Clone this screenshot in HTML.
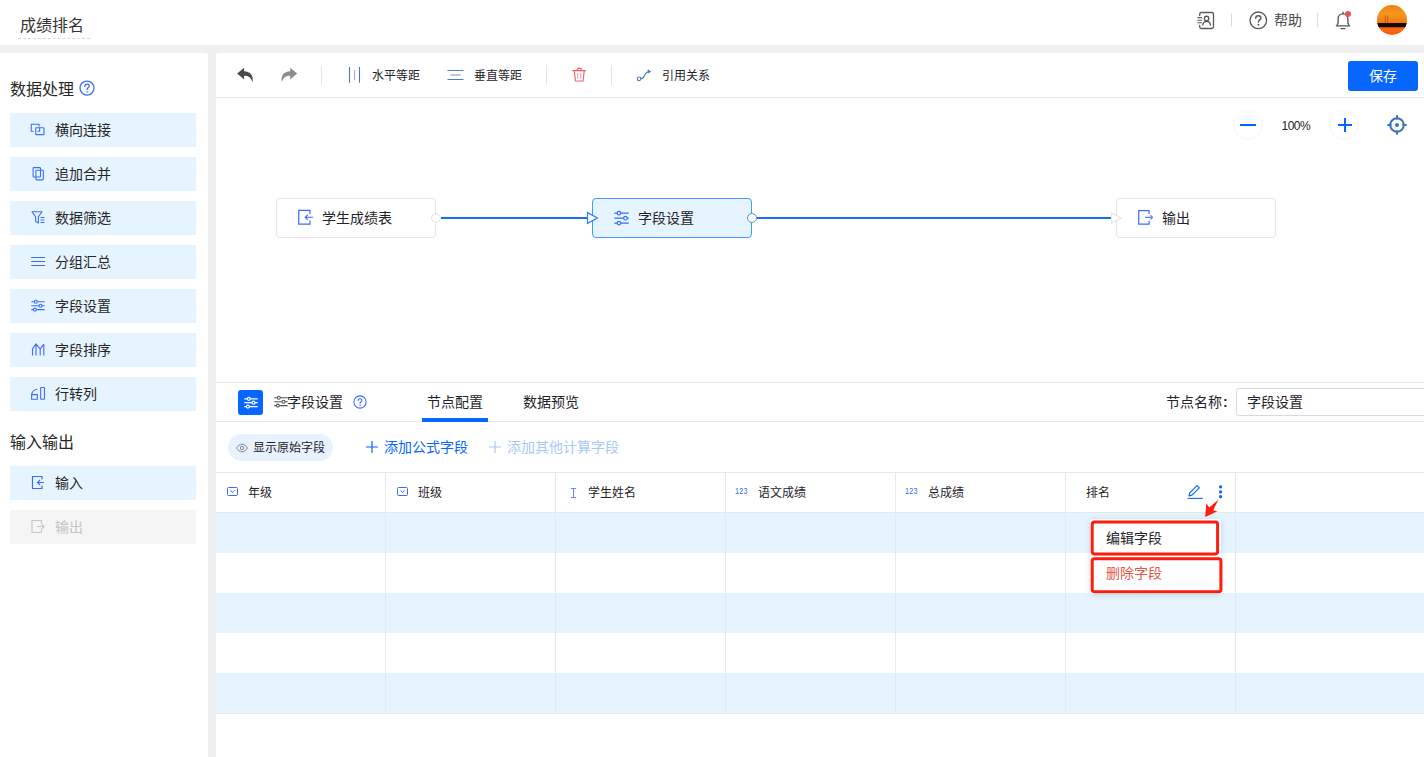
<!DOCTYPE html>
<html lang="zh-CN">
<head>
<meta charset="utf-8">
<title>成绩排名</title>
<style>
*{box-sizing:border-box;margin:0;padding:0}
html,body{width:1424px;height:757px;overflow:hidden;background:#f0f0f0;font-family:"Liberation Sans","Noto Sans CJK SC",sans-serif;color:#1f2329}
.abs{position:absolute}
#header{position:absolute;left:0;top:0;width:1424px;height:45px;background:#fff}
#title{position:absolute;left:18px;top:10px;width:72px;height:29px;border-bottom:1px dashed #d9d9d9;font-size:16px;line-height:31px;padding-left:2px;color:#333;white-space:nowrap}
#sidebar{position:absolute;left:0;top:53px;width:208px;height:704px;background:#fff;border-radius:0 3px 0 0}
.sh{position:absolute;left:10px;font-size:16px;line-height:22px;color:#262626;white-space:nowrap}
.si{position:absolute;left:10px;width:186px;height:34px;background:#e6f4ff;font-size:14px;line-height:34px;color:#262626;white-space:nowrap}
.si span{position:absolute;left:45px;top:0}
.si svg{position:absolute;left:20px;top:9px;overflow:visible}
.si.dis{background:#f5f5f5;color:#c0c4cc}
#main{position:absolute;left:216px;top:53px;width:1208px;height:704px;background:#fff;border-radius:3px 0 0 0}
#toolbar{position:absolute;left:0;top:0;width:1208px;height:45px;border-bottom:1px solid #e8e8e8}
.tt{position:absolute;top:1px;font-size:12px;line-height:44px;color:#1f2329;white-space:nowrap}
.tdiv{position:absolute;top:12px;width:1px;height:20px;background:#e5e5e5}
#save{position:absolute;left:1132px;top:8px;width:70px;height:30px;border-radius:3px;background:#0766fe;color:#fff;font-size:14px;line-height:30px;text-align:center}
.node{position:absolute;top:145px;width:160px;height:40px;border:1px solid #e6e6e6;border-radius:4px;background:#fff;font-size:14px;line-height:38px;color:#1f2329;white-space:nowrap}
.node.sel{border-color:#3f9bff;background:#e6f4ff}
#panel{position:absolute;left:0;top:329px;width:1208px;height:375px;border-top:1px solid #e8e8e8;background:#fff}
.th{position:absolute;top:1px;height:39px;font-size:12px;line-height:39px;color:#1f2329;white-space:nowrap}
.vl{position:absolute;top:90px;width:1px;height:241px;background:#e8e8e8}
.row{position:absolute;left:0;width:1208px;height:40px;background:#e6f4ff}
</style>
</head>
<body>
<div id="header">
  <div id="title">成绩排名</div>
  <!-- contact icon -->
  <svg class="abs" style="left:1196px;top:11px" width="19" height="19" viewBox="0 0 19 19" fill="none" stroke="#5a5a5a" stroke-width="1.350" stroke-linecap="round">
    <path d="M3.700 4.600v-1.300a1.800 1.800 0 0 1 1.800-1.800h10.200a1.800 1.800 0 0 1 1.800 1.800v12.400a1.800 1.800 0 0 1-1.800 1.800h-10.200a1.800 1.800 0 0 1-1.800-1.800v-1.300"/>
    <path d="M1.800 6.600h3.800M1.800 9.200h3.800M1.800 11.800h3.800" stroke="#6a5a4a" stroke-width="1.100"/>
    <circle cx="10.6" cy="7.4" r="2.2"/>
    <path d="M6.8 14c.3-2.3 1.8-3.6 3.8-3.6s3.500 1.300 3.800 3.600"/>
  </svg>
  <div class="abs" style="left:1231px;top:13px;width:1px;height:14px;background:#dcdcdc"></div>
  <svg class="abs" style="left:1249px;top:11px" width="19" height="19" viewBox="0 0 19 19" fill="none" stroke="#5a5a5a" stroke-width="1.300">
    <circle cx="9.3" cy="9.3" r="8.3"/>
    <path d="M6.700 7.300c0-1.600 1.200-2.600 2.600-2.600s2.600 1 2.600 2.400c0 1.700-2.500 1.900-2.500 3.900" stroke-width="1.500" stroke-linecap="round"/>
    <circle cx="9.400" cy="13.700" r=".95" fill="#5a5a5a" stroke="none"/>
  </svg>
  <div class="abs" style="left:1274px;top:8px;font-size:14px;line-height:24px;color:#4a4a4a">帮助</div>
  <div class="abs" style="left:1317px;top:13px;width:1px;height:14px;background:#dcdcdc"></div>
  <!-- bell -->
  <svg class="abs" style="left:1333px;top:10px" width="20" height="21" viewBox="0 0 20 21" fill="none" stroke="#555" stroke-width="1.350" stroke-linecap="round" stroke-linejoin="round">
    <path d="M3.400 15.900h13.200M3.800 15.700l1.300-2.700V9c0-3 2.100-5.100 4.900-5.100s4.900 2.100 4.900 5.100v4l1.300 2.700M10 3.500V2.200M8 18.600h4"/>
    <circle cx="15" cy="3.900" r="3" fill="#e5525a" stroke="none"/>
  </svg>
  <!-- avatar -->
  <svg class="abs" style="left:1377px;top:5px" width="30" height="30" viewBox="0 0 30 30">
    <defs>
      <clipPath id="avc"><circle cx="15" cy="15" r="15"/></clipPath>
      <linearGradient id="avg" x1="0" y1="0" x2="0" y2="1">
        <stop offset="0" stop-color="#ee7f14"/><stop offset=".3" stop-color="#f7981c"/><stop offset=".55" stop-color="#f07c16"/><stop offset=".75" stop-color="#f96a12"/><stop offset="1" stop-color="#f85c0c"/>
      </linearGradient>
    </defs>
    <g clip-path="url(#avc)">
      <rect width="30" height="30" fill="url(#avg)"/>
      <rect x="0" y="18" width="30" height="4" fill="#1a0805"/>
      <rect x="0" y="22" width="30" height=".7" fill="#a8400a"/>
      <path d="M8.400 10.500v7.500M10.600 10.500v7.500" stroke="#8a400c" stroke-width=".55"/>
    </g>
  </svg>
</div>

<div id="sidebar">
  <div class="sh" style="top:26px">数据处理</div>
  <svg class="abs" style="left:79px;top:27px" width="16" height="16" viewBox="0 0 16 16" fill="none" stroke="#3b6cf6" stroke-width="1.250">
    <circle cx="8" cy="8" r="7"/>
    <path d="M5.800 6.400c0-1.300 1-2.200 2.200-2.200s2.200.8 2.200 2c0 1.500-2.100 1.600-2.100 3.300" stroke-linecap="round"/>
    <circle cx="8.100" cy="11.700" r=".75" fill="#3b6cf6" stroke="none"/>
  </svg>

  <div class="si" style="top:60px">
    <svg width="15" height="15" viewBox="0 0 15 15" fill="none" stroke="#3b6cf6" stroke-width="1.100"><path d="M3.600 9.200h-2.300v-6.900h7.700v2.300"/><rect x="5.700" y="5.800" width="8.300" height="6.800" rx=".5"/><path d="M9.600 5.800v3.400h-2"/></svg>
    <span>横向连接</span></div>
  <div class="si" style="top:104px">
    <svg width="15" height="15" viewBox="0 0 15 15" fill="none" stroke="#3b6cf6" stroke-width="1.100"><rect x="3.100" y="1.600" width="7.400" height="9.400" rx=".8"/><rect x="5.900" y="4.300" width="7.400" height="9.600" rx=".8"/></svg>
    <span>追加合并</span></div>
  <div class="si" style="top:148px">
    <svg width="15" height="15" viewBox="0 0 15 15" fill="none" stroke="#3b6cf6" stroke-width="1.100" stroke-linejoin="round"><path d="M2 1.800h10l-3.600 5v6.200l-2.800-1.700v-4.500z"/><path d="M10.500 7.500h4M10.500 10h4M10.500 12.500h4"/></svg>
    <span>数据筛选</span></div>
  <div class="si" style="top:192px">
    <svg width="15" height="15" viewBox="0 0 15 15" fill="none" stroke="#3b6cf6" stroke-width="1.100"><path d="M1.200 3.500h13.800M1.200 7.500h13.800M1.200 11.500h13.800"/></svg>
    <span>分组汇总</span></div>
  <div class="si" style="top:236px">
    <svg width="15" height="15" viewBox="0 0 15 15" fill="none" stroke="#3b6cf6" stroke-width="1.100"><path d="M1.300 3.800h3M7.300 3.800h7.400M1.300 7.700h7.700M12 7.700h2.700M1.300 11.600h2.100M6.400 11.600h8.300"/><circle cx="5.800" cy="3.800" r="1.500"/><circle cx="10.500" cy="7.700" r="1.500"/><circle cx="4.900" cy="11.600" r="1.500"/></svg>
    <span>字段设置</span></div>
  <div class="si" style="top:280px">
    <svg width="15" height="15" viewBox="0 0 15 15" fill="none" stroke="#3b6cf6" stroke-width="1.100"><path d="M2.500 13.500V7L6 2l4.200 5 3.600-4.800M6 13.500V2M10.200 13.500V7M13.800 13.500V2.200"/></svg>
    <span>字段排序</span></div>
  <div class="si" style="top:324px">
    <svg width="15" height="15" viewBox="0 0 15 15" fill="none" stroke="#3b6cf6" stroke-width="1.100"><rect x="10.700" y="1.500" width="3.800" height="11.700" rx=".5"/><path d="M7.300 3.200c-3.300.4-5.400 2.600-5.700 5.800M1.600 8.600h5.700v4.600h-5.700z"/></svg>
    <span>行转列</span></div>

  <div class="sh" style="top:379px">输入输出</div>
  <div class="si" style="top:413px">
    <svg width="15" height="15" viewBox="0 0 15 15" fill="none" stroke="#3b6cf6" stroke-width="1.200"><path d="M12 4.500v-3h-9.500v12h9.500v-3"/><path d="M14 7.500h-6.500M10 5l-2.500 2.500 2.500 2.500" stroke-width="1.100"/></svg>
    <span>输入</span></div>
  <div class="si dis" style="top:457px">
    <svg width="15" height="15" viewBox="0 0 15 15" fill="none" stroke="#c3c8d0" stroke-width="1.200"><path d="M11.500 4.500v-3h-9.500v12h9.500v-3"/><path d="M7 7.500h7M11.500 5l2.500 2.500-2.500 2.500" stroke-width="1.100"/></svg>
    <span>输出</span></div>
</div>

<div id="main">
  <div id="toolbar">
    <!-- undo -->
    <svg class="abs" style="left:19.800px;top:12.900px" width="20.300" height="20.300" viewBox="0 0 18 18"><path d="M7.200 1.500L1 6.700l6.200 5.200V8.700c3.800 0 6 1.200 7.400 5.800 1.200-6-1.900-9.500-7.400-9.800z" fill="#4a4a4a"/></svg>
    <svg class="abs" style="left:62.100px;top:12.900px" width="20.300" height="20.300" viewBox="0 0 18 18"><path d="M10.800 1.500L17 6.700l-6.200 5.200V8.700c-3.800 0-6 1.200-7.400 5.800-1.200-6 1.900-9.500 7.400-9.800z" fill="#8c8c8c"/></svg>
    <div class="tdiv" style="left:105px"></div>
    <svg class="abs" style="left:132px;top:14px" width="14" height="16" viewBox="0 0 14 16" fill="none" stroke="#5a73a8" stroke-width="1.100"><path d="M1.500 0v15.700M11.500 0v15.700"/><path d="M6.500 3v10" stroke="#a9a6cc"/></svg>
    <div class="tt" style="left:156px">水平等距</div>
    <svg class="abs" style="left:231px;top:15px" width="17" height="14" viewBox="0 0 17 14" fill="none" stroke="#4a7fb8" stroke-width="1.100"><path d="M.5 2.500h16M.5 11.500h16"/><path d="M3.500 7h10" stroke="#9ba3cc" stroke-width="1.300"/></svg>
    <div class="tt" style="left:258px">垂直等距</div>
    <div class="tdiv" style="left:330px"></div>
    <!-- trash -->
    <svg class="abs" style="left:355.500px;top:13.500px" width="14.500" height="15.400" viewBox="0 0 16 17" fill="none" stroke="#f0606a" stroke-width="1.250" stroke-linecap="round"><path d="M1 4h14M5.300 4c0-1.700 1-2.700 2.700-2.700s2.700 1 2.700 2.700M2.500 4l1.300 11.500h8.400l1.300-11.500"/><path d="M6.300 7v5.500M9.700 7v5.500" stroke="#f59aa0"/></svg>
    <div class="tdiv" style="left:395px"></div>
    <svg class="abs" style="left:420px;top:15px" width="16" height="14" viewBox="0 0 16 14" fill="none" stroke="#4f78b8" stroke-width="1.100"><circle cx="3" cy="10.800" r="1.800"/><path d="M4.800 10.800c5 0 2.600-6.800 8.200-7"/><path d="M11.800 1.300l3.400 2.400-3.600 1.900z" fill="#4f78b8" stroke="none"/></svg>
    <div class="tt" style="left:446px">引用关系</div>
    <div id="save">保存</div>
  </div>

  <!-- zoom controls -->
  <div class="abs" style="left:1017px;top:57px;width:30px;height:30px;border:1px solid #f7f7f7;border-radius:50%"></div>
  <div class="abs" style="left:1024px;top:71px;width:16px;height:2px;background:#0766fe"></div>
  <div class="abs" style="left:1065.500px;top:64px;font-size:12px;line-height:18px;letter-spacing:-.5px">100%</div>
  <div class="abs" style="left:1113px;top:57px;width:30px;height:30px;border:1px solid #f7f7f7;border-radius:50%"></div>
  <div class="abs" style="left:1121.500px;top:71px;width:14px;height:2px;background:#0766fe"></div>
  <div class="abs" style="left:1127.500px;top:65px;width:2px;height:14px;background:#0766fe"></div>
  <svg class="abs" style="left:1171px;top:62px" width="20" height="20" viewBox="0 0 20 20" fill="none" stroke="#3b73b8" stroke-width="2"><circle cx="10" cy="10" r="6.800"/><path d="M10 0.300v4.200M10 15.500v4.200M0.300 10h4.200M15.500 10h4.200"/><circle cx="10" cy="10" r="2" fill="#3b73b8" stroke="none"/></svg>

  <!-- edges -->
  <svg class="abs" style="left:0;top:140px" width="1208" height="50" viewBox="0 0 1208 50" fill="none">
    <path d="M225 25h148" stroke="#1a6bff" stroke-width="2"/>
    <path d="M541 25h354" stroke="#1a6bff" stroke-width="2"/>
  </svg>

  <div class="node" style="left:60px">
    <svg class="abs" style="left:19.500px;top:10.400px" width="16.500" height="16.500" viewBox="0 0 15 15" fill="none" stroke="#3b6cf6" stroke-width="1.100"><path d="M11.800 4.600v-3.300H1.600v12.400h10.200v-3.300"/><path d="M14.500 7.500h-7M9.800 5.200l-2.300 2.300 2.300 2.300" stroke-width="1"/></svg>
    <span class="abs" style="left:45px;top:0">学生成绩表</span>
  </div>
  <div class="node sel" style="left:376px">
    <svg class="abs" style="left:19.500px;top:11px" width="16.500" height="16.500" viewBox="0 0 15 15" fill="none" stroke="#3b6cf6" stroke-width="1.050"><path d="M1.200 2.900h2.600M7 2.900h7.400M1.200 7.450h8.500M12.900 7.450h1.500M1.200 11.900h2.600M7 11.900h7.400"/><circle cx="5.400" cy="2.900" r="1.600"/><circle cx="11.300" cy="7.450" r="1.600"/><circle cx="5.400" cy="11.900" r="1.600"/></svg>
    <span class="abs" style="left:45px;top:0">字段设置</span>
  </div>
  <div class="node" style="left:900px">
    <svg class="abs" style="left:19.500px;top:10.400px" width="16.500" height="16.500" viewBox="0 0 15 15" fill="none" stroke="#3b6cf6" stroke-width="1.100"><path d="M11 4.600v-3.200H1.600v12.400h9.400v-3.200"/><path d="M7.300 7.600h6.700M12.200 5.600l2 2-2 2" stroke="#5f7fff" stroke-width="1"/></svg>
    <span class="abs" style="left:45px;top:0">输出</span>
  </div>
  <!-- ports & arrows -->
  <svg class="abs" style="left:0;top:140px" width="1208" height="50" viewBox="0 0 1208 50" fill="#fff">
    <circle cx="220" cy="25" r="4.500" stroke="#e0e0e0"/>
    <path d="M371.500 19.600l9.900 5.400-9.900 5.400z" stroke="#2f7dff" stroke-width="1.200"/>
    <circle cx="536" cy="25" r="4.500" stroke="#5b8fd6"/>
    <path d="M895.500 20l9.500 5-9.500 5z" stroke="#e6e6e6" stroke-width="1.200"/>
  </svg>

  <div id="panel">
    <div class="abs" style="left:22px;top:7px;width:25px;height:25px;border-radius:3px;background:#0766fe"></div>
    <svg class="abs" style="left:27px;top:12px" width="15" height="15" viewBox="0 0 15 15" fill="none" stroke="#fff" stroke-width="1.200"><path d="M1.300 3.800h3M7.300 3.800h7.400M1.300 7.700h7.700M12 7.700h2.700M1.300 11.600h2.100M6.400 11.600h8.300"/><circle cx="5.800" cy="3.800" r="1.500"/><circle cx="10.500" cy="7.700" r="1.500"/><circle cx="4.900" cy="11.600" r="1.500"/></svg>
    <svg class="abs" style="left:56.500px;top:11px" width="15" height="15" viewBox="0 0 15 15" fill="none" stroke="#555" stroke-width="1.100"><path d="M1.300 3.800h3M7.300 3.800h7.400M1.300 7.700h7.700M12 7.700h2.700M1.300 11.600h2.100M6.400 11.600h8.300"/><circle cx="5.800" cy="3.800" r="1.500"/><circle cx="10.500" cy="7.700" r="1.500"/><circle cx="4.900" cy="11.600" r="1.500"/></svg>
    <div class="abs" style="left:71px;top:7px;font-size:14px;line-height:24px;white-space:nowrap">字段设置</div>
    <svg class="abs" style="left:137px;top:12px" width="14" height="14" viewBox="0 0 16 16" fill="none" stroke="#3b6cf6" stroke-width="1.200">
      <circle cx="8" cy="8" r="7"/>
      <path d="M5.800 6.400c0-1.300 1-2.200 2.200-2.200s2.200.8 2.200 2c0 1.500-2.100 1.600-2.100 3.300" stroke-linecap="round"/>
      <circle cx="8.100" cy="11.700" r=".8" fill="#3b6cf6" stroke="none"/>
    </svg>
    <div class="abs" style="left:211px;top:7px;font-size:14px;line-height:24px;white-space:nowrap">节点配置</div>
    <div class="abs" style="left:307px;top:7px;font-size:14px;line-height:24px;white-space:nowrap">数据预览</div>
    <div class="abs" style="left:0;top:38px;width:1208px;height:1px;background:#e8e8e8"></div>
    <div class="abs" style="left:206px;top:35px;width:66px;height:4px;background:#0766fe"></div>
    <div class="abs" style="left:950px;top:7px;font-size:14px;line-height:24px;white-space:nowrap">节点名称<span style="margin-left:1px;font-weight:bold">:</span></div>
    <div class="abs" style="left:1020px;top:5px;width:200px;height:28px;border:1px solid #dadada;border-radius:3px;font-size:14px;line-height:27px;padding-left:10px;white-space:nowrap">字段设置</div>

    <!-- action row -->
    <div class="abs" style="left:12px;top:51px;width:105px;height:27px;border-radius:13.500px;background:#e8f2fe"></div>
    <svg class="abs" style="left:20px;top:60px" width="12" height="10" viewBox="0 0 12 10" fill="none" stroke="#7d8492" stroke-width="1"><path d="M.6 5c1.400-2.600 3.200-3.800 5.400-3.800s4 1.200 5.400 3.800c-1.400 2.600-3.200 3.800-5.400 3.800s-4-1.200-5.400-3.800z"/><circle cx="6" cy="5" r="1.700"/></svg>
    <div class="abs" style="left:37px;top:56px;font-size:12px;line-height:18px;white-space:nowrap">显示原始字段</div>
    <svg class="abs" style="left:150px;top:58px" width="12" height="12" viewBox="0 0 12 12" stroke="#0766fe" stroke-width="1.200"><path d="M6 0v12M0 6h12"/></svg>
    <div class="abs" style="left:168px;top:53px;font-size:14px;line-height:22px;color:#0766fe;white-space:nowrap">添加公式字段</div>
    <svg class="abs" style="left:273px;top:58px" width="12" height="12" viewBox="0 0 12 12" stroke="#a9c8fa" stroke-width="1.200"><path d="M6 0v12M0 6h12"/></svg>
    <div class="abs" style="left:291px;top:53px;font-size:14px;line-height:22px;color:#a9c8fa;white-space:nowrap">添加其他计算字段</div>

    <!-- table -->
    <div class="abs" style="left:0;top:89px;width:1208px;height:1px;background:#e8e8e8"></div>
    <div class="abs" style="left:0;top:129px;width:1208px;height:1px;background:#e8e8e8"></div>
    <div class="row" style="top:130px"></div>
    <div class="row" style="top:210px"></div>
    <div class="row" style="top:290px"></div>
    <div class="abs" style="left:0;top:330px;width:1208px;height:1px;background:#e8e8e8"></div>
    <div class="vl" style="left:169px"></div>
    <div class="vl" style="left:339px"></div>
    <div class="vl" style="left:509px"></div>
    <div class="vl" style="left:679px"></div>
    <div class="vl" style="left:849px"></div>
    <div class="vl" style="left:1019px"></div>

    <div class="abs" style="left:0;top:90px;width:1208px;height:39px">
      <svg class="abs" style="left:11px;top:14px" width="11" height="9" viewBox="0 0 11 9" fill="none" stroke="#3b6cf6" stroke-width="1"><rect x=".5" y=".5" width="10" height="8" rx="1"/><path d="M3.500 3.500l2 1.800 2-1.800"/></svg>
      <div class="th" style="left:32px">年级</div>
      <svg class="abs" style="left:181px;top:14px" width="11" height="9" viewBox="0 0 11 9" fill="none" stroke="#3b6cf6" stroke-width="1"><rect x=".5" y=".5" width="10" height="8" rx="1"/><path d="M3.500 3.500l2 1.800 2-1.800"/></svg>
      <div class="th" style="left:202px">班级</div>
      <svg class="abs" style="left:354px;top:15px" width="7" height="10" viewBox="0 0 7 10" fill="none" stroke="#6f86f5" stroke-width="1"><path d="M.8 .5h5.400M3.500 .5v9M.8 9.500h5.400"/></svg>
      <div class="th" style="left:372px">学生姓名</div>
      <div class="abs" style="left:519px;top:13px;font-size:9px;line-height:10px;color:#3b6cf6;letter-spacing:.3px;transform:scaleX(.8);transform-origin:0 0">123</div>
      <div class="th" style="left:542px">语文成绩</div>
      <div class="abs" style="left:689px;top:13px;font-size:9px;line-height:10px;color:#3b6cf6;letter-spacing:.3px;transform:scaleX(.8);transform-origin:0 0">123</div>
      <div class="th" style="left:712px">总成绩</div>
      <div class="th" style="left:870px">排名</div>
      <svg class="abs" style="left:970px;top:12px" width="17" height="15" viewBox="0 0 17 15" fill="none" stroke="#0766fe" stroke-width="1.200" stroke-linejoin="round"><path d="M3 10.900l.7-3 7.300-7.300 2.300 2.300-7.300 7.300z"/><path d="M1.600 13.400h15.200" stroke-width="1.100"/></svg>
      <svg class="abs" style="left:1002px;top:12px" width="5" height="15" viewBox="0 0 5 15" fill="#0766fe"><circle cx="2.600" cy="1.800" r="1.600"/><circle cx="2.600" cy="6.900" r="1.600"/><circle cx="2.600" cy="11.700" r="1.600"/></svg>
    </div>

    <!-- popup -->
    <div class="abs" style="left:874px;top:136px;width:131px;height:75px;background:#fff;border-radius:3px;box-shadow:0 1px 6px rgba(0,0,0,.13)"></div>
    <svg class="abs" style="left:870px;top:110px" width="150" height="110" viewBox="0 0 150 110" fill="none">
      <rect x="6.200" y="29" width="125.400" height="31.900" rx="2.300" fill="#fff" stroke="#fb1d10" stroke-width="3"/>
      <rect x="6.200" y="65.800" width="128.700" height="32.900" rx="2.300" fill="#fff" stroke="#fb1d10" stroke-width="3"/>
      <path d="M132.400 6.800L123.200 14.400L120.300 10.200L119.200 23.900L131.400 18.300L127.200 17.200Z" fill="#fb1d10"/>
    </svg>
    <div class="abs" style="left:890px;top:143px;font-size:14px;line-height:24px;white-space:nowrap">编辑字段</div>
    <div class="abs" style="left:890px;top:178px;font-size:14px;line-height:24px;color:#e2574c;white-space:nowrap">删除字段</div>
  </div>
</div>
</body>
</html>
